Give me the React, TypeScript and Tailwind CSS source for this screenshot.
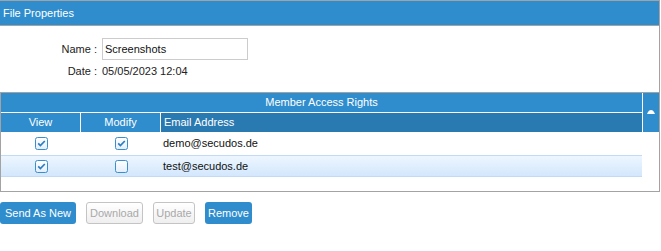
import React from "react";

const FONT = { fontFamily: '"Liberation Sans", Arial, sans-serif' };

function Check({ checked }: { checked: boolean }) {
  return (
    <svg width="13" height="13" viewBox="0 0 13 13" className="block">
      <defs>
        <linearGradient id="cbg" x1="0" y1="0" x2="0" y2="1">
          <stop offset="0" stopColor="#ffffff" />
          <stop offset="1" stopColor="#e3eefa" />
        </linearGradient>
      </defs>
      <rect x="0.5" y="0.5" width="12" height="12" rx="2" fill="url(#cbg)" stroke="#3a8dce" />
      {checked && (
        <path d="M3.2 6.4 L5.4 8.6 L9.8 4" fill="none" stroke="#2b7dc2" strokeWidth="1.7" />
      )}
    </svg>
  );
}

const rows = [
  { view: true, modify: true, email: "demo@secudos.de", selected: false },
  { view: true, modify: false, email: "test@secudos.de", selected: true },
];

export default function App() {
  return (
    <div className="h-[251px] w-[661px] bg-white text-[11px] text-[#222]" style={FONT}>
      <div className="w-[660px] border-r border-t border-[#a3a3a3]">
        <div className="flex h-[25px] items-center border-b border-[#a3a3a3] bg-[#2f8dcd] pl-[3px] text-white">
          File Properties
        </div>

        <div className="mt-[12px] grid grid-cols-[97px_1fr] items-center gap-x-[5px] gap-y-[3px]">
          <div className="text-right">Name :</div>
          <input
            readOnly
            value="Screenshots"
            className="h-[22px] w-[146px] border border-[#cccccc] px-[2px] text-[11px] text-[#111] outline-none"
            style={FONT}
          />
          <div className="flex h-[16px] items-center justify-end">Date :</div>
          <div className="flex h-[16px] items-center">05/05/2023 12:04</div>
        </div>

        <div className="mt-[13px] border-y border-l border-[#a3a3a3]">
          <div className="flex">
            <div className="w-[641px]">
              <div className="flex h-[19px] items-center justify-center bg-[#2f8dcd] text-white">
                Member Access Rights
              </div>
              <div className="flex h-[20px] border-t border-white text-white">
                <div className="flex w-[79px] items-center justify-center bg-[#2f8dcd]">View</div>
                <div className="flex w-[80px] items-center justify-center border-l border-white bg-[#2f8dcd]">
                  Modify
                </div>
                <div className="flex flex-1 items-center border-l border-white bg-[#2a7ab2] pl-[3px]">
                  Email Address
                </div>
              </div>
              <div className="h-[59px]">
                {rows.map((r) => (
                  <div
                    key={r.email}
                    className={
                      "flex items-center " +
                      (r.selected
                        ? "h-[22px] border-y border-[#c2daf4] bg-gradient-to-b from-[#edf6ff] to-[#d3e7fc]"
                        : "h-[23px]")
                    }
                  >
                    <div className="flex w-[79px] justify-center pl-[2px]">
                      <Check checked={r.view} />
                    </div>
                    <div className="flex w-[80px] justify-center pl-[2px]">
                      <Check checked={r.modify} />
                    </div>
                    <div className="flex-1 pl-[3px] text-[#111]">{r.email}</div>
                  </div>
                ))}
              </div>
            </div>
            <div className="ml-px w-[16px]">
              <div className="flex h-[39px] items-center justify-center bg-[#2f8dcd]">
                <svg width="8" height="4" viewBox="0 0 8 4" className="mt-[-2px]">
                  <path d="M0 4 L1 2 Q2 0 4 0 Q6 0 7 2 L8 4 Z" fill="#ffffff" />
                </svg>
              </div>
            </div>
          </div>
        </div>
      </div>

      <div className="mt-[10px] flex gap-[10px]">
        <button className="h-[22px] w-[76px] rounded-[3px] bg-[#2f8dcd] text-[11px] text-white" style={FONT}>
          Send As New
        </button>
        <button
          disabled
          className="h-[22px] w-[57px] rounded-[3px] border border-[#c4c4c4] bg-gradient-to-b from-white to-[#efefef] text-[11px] text-[#a9a9a9]"
          style={FONT}
        >
          Download
        </button>
        <button
          disabled
          className="h-[22px] w-[42px] rounded-[3px] border border-[#c4c4c4] bg-gradient-to-b from-white to-[#efefef] text-[11px] text-[#a9a9a9]"
          style={FONT}
        >
          Update
        </button>
        <button className="h-[22px] w-[47px] rounded-[3px] bg-[#2f8dcd] text-[11px] text-white" style={FONT}>
          Remove
        </button>
      </div>
    </div>
  );
}
